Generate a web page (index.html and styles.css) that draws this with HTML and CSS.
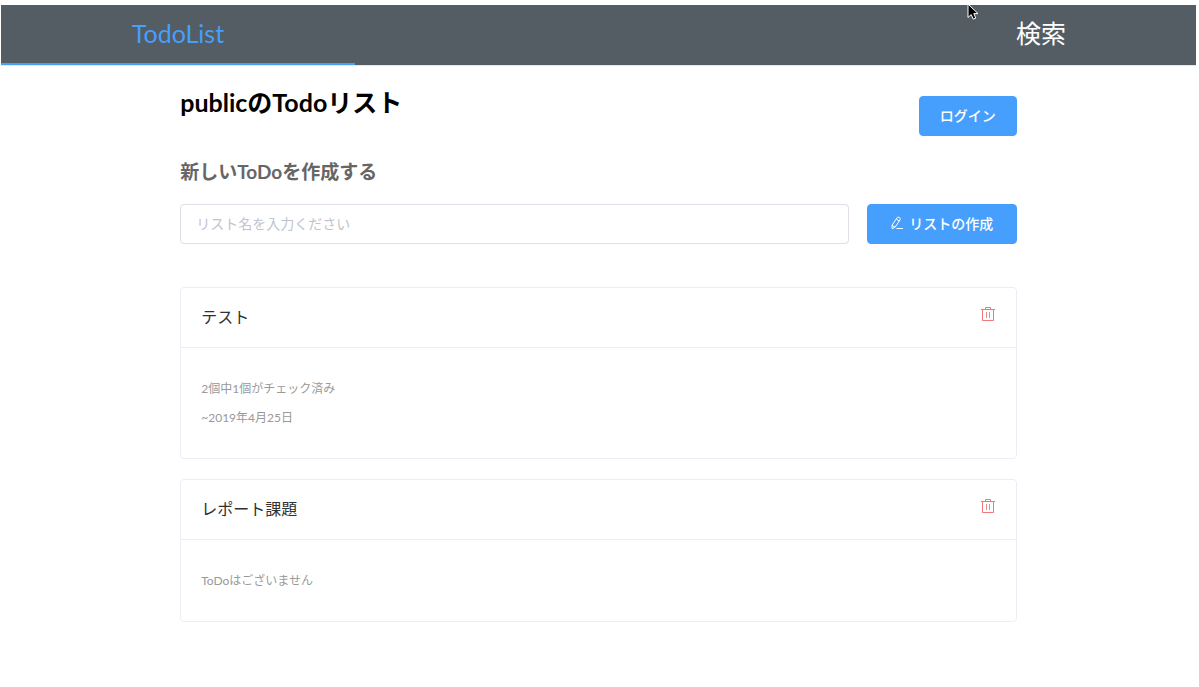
FILE: index.html
```html
<!DOCTYPE html>
<html lang="ja">
<head>
<meta charset="utf-8">
<meta name="viewport" content="width=device-width, initial-scale=1">
<title>TodoList</title>
<link rel="stylesheet" href="styles.css">
</head>
<body>
<nav class="menu">
  <a class="menu-item menu-item-home" href="#">TodoList</a>
  <a class="menu-item menu-item-search" href="#">検索</a>
</nav>
<main class="content">
  <header class="page-head">
    <h1 class="page-title">publicのTodoリスト</h1>
    <button class="button" type="button">ログイン</button>
  </header>
  <form class="create">
    <label class="create-title" for="list-name">新しいToDoを作成する</label>
    <div class="create-row">
      <input class="input" id="list-name" type="text" placeholder="リスト名を入力ください">
      <button class="button button-create" type="button">
        <svg class="icon-edit" viewBox="0 0 14 14" aria-hidden="true"><path d="M2 9.3 7.2 1.6Q8 .7 9.2 1.4Q10.8 2.2 10.2 3.5L5.2 11.2 2.2 12.7ZM6.3 3 9.2 4.9M2.1 9.4 5 11.2M6.5 12.5H13"/></svg>
        <span>リストの作成</span>
      </button>
    </div>
  </form>
  <section class="lists">
    <article class="card">
      <header class="card-head">
        <h2 class="card-title">テスト</h2>
        <button class="delete" type="button" aria-label="テストを削除">
          <svg class="icon-delete" viewBox="0 0 16 16" aria-hidden="true"><path d="M1 3.5H15M5.5 3V1.5H10.5V3M2.5 4V14.5H13.5V4"/><path class="icon-delete-bars" d="M6.5 6V12M9.5 6V12"/></svg>
        </button>
      </header>
      <div class="card-body">
        <p class="note">2個中1個がチェック済み</p>
        <p class="note">~2019年4月25日</p>
      </div>
    </article>
    <article class="card">
      <header class="card-head">
        <h2 class="card-title">レポート課題</h2>
        <button class="delete" type="button" aria-label="レポート課題を削除">
          <svg class="icon-delete" viewBox="0 0 16 16" aria-hidden="true"><path d="M1 3.5H15M5.5 3V1.5H10.5V3M2.5 4V14.5H13.5V4"/><path class="icon-delete-bars" d="M6.5 6V12M9.5 6V12"/></svg>
        </button>
      </header>
      <div class="card-body">
        <p class="note">ToDoはございません</p>
      </div>
    </article>
  </section>
</main>
<svg class="cursor" viewBox="0 0 12 18" aria-hidden="true"><path d="M1 1V14.5L4.2 11.6 6.3 16.2 8.8 15.1 6.8 10.6H11Z"/></svg>
</body>
</html>
```
FILE: styles.css
```css
* {
  box-sizing: border-box;
}

body {
  margin: 5px 3px 0 1px;
  background: #fff;
  font-family: Lato, "Noto Sans CJK JP", sans-serif;
  color: #303133;
}

h1, h2, p {
  margin: 0;
}

button, input {
  font-family: inherit;
}

.menu {
  display: flex;
  justify-content: space-between;
  background: #545c64;
  border-bottom: 1px solid #e6e6e6;
}

.menu-item {
  height: 60px;
  line-height: 57px;
  font-size: 25px;
  text-align: center;
  text-decoration: none;
  color: #fff;
}

.menu-item-home {
  width: 354px;
  border-bottom: 2px solid #469ffd;
  color: #469ffd;
}

.menu-item-search {
  width: 310px;
}

.content {
  width: 70%;
  margin: 0 auto;
  padding-bottom: 40px;
}

.page-head {
  display: flex;
  justify-content: space-between;
  align-items: flex-start;
  padding-top: 30px;
}

.page-title {
  font-size: 25px;
  line-height: 12px;
  font-weight: 700;
  color: #000;
}

.button {
  height: 40px;
  padding: 0 20px 2px;
  border: 1px solid #469ffd;
  border-radius: 4px;
  background: #469ffd;
  color: #fff;
  font-size: 14px;
  font-weight: 500;
  white-space: nowrap;
}

.create {
  margin-top: 22px;
}

.create-title {
  display: block;
  font-size: 19px;
  line-height: 28px;
  font-weight: 700;
  color: #666;
}

.create-row {
  display: flex;
  gap: 18px;
  margin-top: 18px;
}

.input {
  flex: 1;
  min-width: 0;
  height: 40px;
  padding: 0 15px 2px;
  border: 1px solid #dcdfe6;
  border-radius: 4px;
  background: #fff;
  color: #606266;
  font-size: 14px;
}

.input::placeholder {
  color: #c0c4cc;
}

.button-create {
  display: flex;
  align-items: center;
  justify-content: center;
  gap: 5px;
  width: 150px;
}

.icon-edit {
  width: 14px;
  height: 14px;
  fill: none;
  stroke: #fff;
  stroke-width: 1;
}

.lists {
  display: grid;
  gap: 20px;
  margin-top: 43px;
}

.card {
  border: 1px solid #ebeef5;
  border-radius: 4px;
}

.card-head {
  display: flex;
  justify-content: space-between;
  align-items: flex-start;
  padding: 18px 20px 20px;
  border-bottom: 1px solid #ebeef5;
}

.card-title {
  font-size: 16px;
  line-height: 21px;
  font-weight: 400;
}

.delete {
  display: flex;
  padding: 0;
  border: 0;
  background: none;
}

.icon-delete {
  width: 16px;
  height: 16px;
  fill: none;
  stroke: #f17878;
  stroke-width: 1;
}

.icon-delete-bars {
  stroke: #f08a8a;
}

.card-body {
  padding: 26px 20px;
}

.note {
  font-size: 12px;
  line-height: 29px;
  color: #999;
}

.cursor {
  position: absolute;
  top: 3px;
  left: 967px;
  width: 12px;
  height: 18px;
  fill: #000;
  stroke: #fff;
  stroke-width: 1;
}
```
